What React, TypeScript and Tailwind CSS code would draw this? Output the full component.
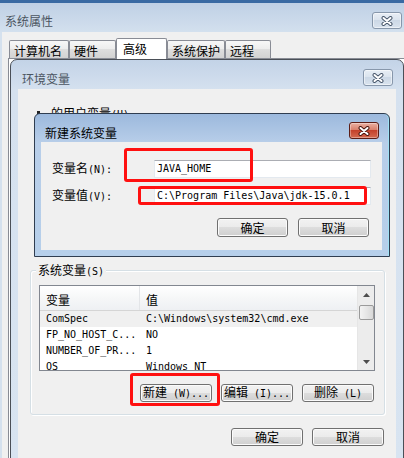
import type { ReactNode } from 'react'

const MONO = "font-['DejaVu_Sans_Mono','Noto_Sans_CJK_SC',monospace] text-[10px]"

const VARS: [string, string][] = [
  ['ComSpec', 'C:\\Windows\\system32\\cmd.exe'],
  ['FP_NO_HOST_C...', 'NO'],
  ['NUMBER_OF_PR...', '1'],
  ['OS', 'Windows_NT'],
]

function CloseX({ active = false }: { active?: boolean }) {
  return (
    <div
      className={
        active
          ? 'flex h-[17px] w-[30px] shrink-0 items-center justify-center rounded-[3px] border border-[#5c1d16] bg-[linear-gradient(#eab0a2,#d9806c_45%,#c4412b_50%,#d46a50)] shadow-[inset_0_0_0_1px_rgba(255,255,255,0.35)]'
          : 'flex h-[17px] w-[30px] shrink-0 items-center justify-center rounded-[3px] border border-[#8797ab] bg-[linear-gradient(#e8eef5,#dbe4ee_45%,#ccd8e6_50%,#d9e3ee)] shadow-[inset_0_0_0_1px_rgba(255,255,255,0.5)]'
      }
    >
      <svg width="14" height="10" viewBox="0 0 14 10">
        <path d="M3.5 2L10.5 8M10.5 2L3.5 8" stroke={active ? '#4a1710' : '#4a596d'} strokeWidth="4" strokeLinecap="round" fill="none" />
        <path d="M3.5 2L10.5 8M10.5 2L3.5 8" stroke="#fff" strokeWidth="2" strokeLinecap="round" fill="none" />
      </svg>
    </div>
  )
}

function Btn({ children, size }: { children: ReactNode; size: string }) {
  return (
    <div
      className={`flex items-center justify-center rounded-[3px] border border-[#707070] bg-[linear-gradient(#f2f2f2,#ebebeb_50%,#dddddd_50%,#cfcfcf)] shadow-[inset_0_0_0_1px_#fbfbfb] ${size}`}
    >
      {children}
    </div>
  )
}

function Mixed({ zh, en }: { zh: string; en: string }) {
  return (
    <span className="whitespace-pre">
      {zh}
      <span className={MONO}>{en}</span>
    </span>
  )
}

function Tab({ label, width, selected = false }: { label: string; width: string; selected?: boolean }) {
  if (selected) {
    return (
      <div className={`relative z-10 -mb-px h-[21px] shrink-0 rounded-t-[2px] border border-b-0 border-[#898c95] bg-white pl-[6px] pt-[3px] ${width}`}>
        {label}
      </div>
    )
  }
  return (
    <div className={`h-[18px] shrink-0 rounded-t-[2px] border border-b-0 border-[#898c95] bg-[linear-gradient(#f7f7f7,#ececec_50%,#dedede_50%,#d2d2d2)] pl-[4px] pt-[3px] ${width}`}>
      {label}
    </div>
  )
}

function Input({ value }: { value: string }) {
  return (
    <div className={`flex h-[18px] w-[217px] items-center border border-[#e3e9ef] border-t-[#abadb3] bg-white pl-[2px] text-black ${MONO}`}>
      {value}
    </div>
  )
}

function Arrow({ up }: { up?: boolean }) {
  return (
    <svg width="7" height="4" viewBox="0 0 7 4">
      <path d={up ? 'M0 4L3.5 0L7 4Z' : 'M0 0L7 0L3.5 4Z'} fill="#4d4d4d" />
    </svg>
  )
}

export default function App() {
  return (
    <div className="relative h-[458px] w-[404px] overflow-hidden bg-[#d5e1ee] font-['Noto_Sans_CJK_SC',sans-serif] text-[12px] leading-[14px] text-black">
      {/* 系统属性 window */}
      <div className="flex h-full flex-col border-t-[3px] border-[#3a6aa3]">
        <div className="flex h-[29px] shrink-0 items-start justify-between bg-[linear-gradient(#bfd0e5,#d3e0ee)] pl-[5px] pr-[2px]">
          <span className="mt-[11px] text-[#4b5561]">系统属性</span>
          <div className="mt-[9px]">
            <CloseX />
          </div>
        </div>
        <div className="ml-[2px] flex flex-1 flex-col bg-[#f0f0f0] pt-[6px]">
          <div className="flex h-[20px] items-end pl-[7px]">
            <Tab label="计算机名" width="w-[60px]" />
            <Tab label="硬件" width="w-[47px]" />
            <Tab label="高级" width="w-[51px]" selected />
            <Tab label="系统保护" width="w-[58px]" />
            <Tab label="远程" width="w-[46px]" />
          </div>
          <div className="ml-[6px] flex-1 border-l border-t border-[#898c95] bg-white" />
        </div>
      </div>

      {/* 环境变量 window */}
      <div className="absolute left-[10px] top-[59px] flex h-[410px] w-[394px] flex-col rounded-t-[7px] border border-[#4a4f57] bg-[linear-gradient(#c3d3e7,#d5e1ef_30px,#d8e4f1)] px-[7px]">
        <div className="flex h-[29px] shrink-0 items-start justify-between pl-[4px] pr-[3px]">
          <span className="mt-[12px] text-[#4b5561]">环境变量</span>
          <div className="mt-[9px]">
            <CloseX />
          </div>
        </div>
        <div className="flex flex-1 flex-col bg-[#f0f0f0]">
          {/* user variables, mostly hidden under the dialog */}
          <div className="h-[181px] shrink-0 pl-[19px] pt-[17px]">
            <span className="mr-[11px] inline-block h-[7px] w-[3px] bg-[#222]" />
            <Mixed zh="的用户变量" en="(U)" />
          </div>

          {/* system variables group */}
          <div className="ml-[12px] mr-[11px] flex flex-col rounded-[3px] border border-[#d5dfe5] pb-[12px] shadow-[inset_1px_1px_0_#fff,1px_1px_0_#fff]">
            <div className="-mt-[8px] ml-[5px] w-fit bg-[#f0f0f0] px-[2px]">
              <Mixed zh="系统变量" en="(S)" />
            </div>
            <div className="ml-[8px] mt-[6px] flex h-[86px] w-[336px] overflow-hidden border border-[#828790] bg-white">
              <div className="flex flex-1 flex-col">
                <div className="flex h-[25px] shrink-0 border-b border-[#d5d5d5] bg-[linear-gradient(#ffffff,#f6f7f8_50%,#eef0f3)]">
                  <div className="w-[100px] border-r border-[#e3e5e8] pl-[6px] pt-[7px]">变量</div>
                  <div className="pl-[6px] pt-[7px]">值</div>
                </div>
                {VARS.map(([name, value], i) => (
                  <div key={name} className={`flex h-[16px] shrink-0 items-center ${MONO} ${i === 0 ? 'bg-[#f0f0f0]' : ''}`}>
                    <div className="w-[100px] pl-[6px]">{name}</div>
                    <div className="pl-[6px]">{value}</div>
                  </div>
                ))}
              </div>
              <div className="flex w-[17px] shrink-0 flex-col items-center border-l border-[#e6e6e6] bg-[#ececec]">
                <div className="flex h-[17px] items-center justify-center">
                  <Arrow up />
                </div>
                <div className="mt-[2px] h-[15px] w-[15px] rounded-[2px] border border-[#9a9a9a] bg-[linear-gradient(90deg,#f3f3f3,#e6e6e6_50%,#d8d8d8)]" />
                <div className="flex-1" />
                <div className="flex h-[17px] items-center justify-center">
                  <Arrow />
                </div>
              </div>
            </div>
            <div className="mt-[13px] flex justify-end gap-[9px] pr-[10px]">
              <Btn size="h-[18px] w-[72px]">
                <Mixed zh="新建" en=" (W)..." />
              </Btn>
              <Btn size="h-[18px] w-[72px]">
                <Mixed zh="编辑" en=" (I)..." />
              </Btn>
              <Btn size="h-[18px] w-[72px]">
                <Mixed zh="删除" en=" (L)" />
              </Btn>
            </div>
          </div>

          <div className="mt-[13px] flex justify-end gap-[9px] pr-[12px]">
            <Btn size="h-[18px] w-[72px]">确定</Btn>
            <Btn size="h-[18px] w-[72px]">取消</Btn>
          </div>
        </div>
      </div>

      {/* 新建系统变量 dialog */}
      <div className="absolute left-[34px] top-[113px] flex h-[144px] w-[356px] flex-col rounded-t-[6px] border border-[#2f3d50] bg-[linear-gradient(#9cb9dd,#b8cee9_29px,#b6cfea)] pb-[6px] pl-[6px] pr-[7px] shadow-[inset_-1px_0_0_#9fe1f5]">
        <div className="flex h-[28px] shrink-0 items-start justify-between pl-[4px] pr-[3px]">
          <span className="mt-[12px]">新建系统变量</span>
          <div className="mt-[8px]">
            <CloseX active />
          </div>
        </div>
        <div className="flex flex-1 flex-col bg-[#f0f0f0] px-[11px] pt-[18px]">
          <div className="flex h-[18px] items-center">
            <span className="w-[102px]">
              <Mixed zh="变量名" en="(N):" />
            </span>
            <Input value="JAVA_HOME" />
          </div>
          <div className="mt-[9px] flex h-[18px] items-center">
            <span className="w-[102px]">
              <Mixed zh="变量值" en="(V):" />
            </span>
            <Input value="C:\Program Files\Java\jdk-15.0.1" />
          </div>
          <div className="mt-[13px] flex justify-end gap-[10px] pr-[2px]">
            <Btn size="h-[19px] w-[71px]">确定</Btn>
            <Btn size="h-[19px] w-[71px]">取消</Btn>
          </div>
        </div>
      </div>

      {/* red annotation boxes */}
      <div className="absolute left-[124px] top-[148px] h-[34px] w-[129px] rounded-[3px] border-[3px] border-[#ff1010]" />
      <div className="absolute left-[138px] top-[186px] h-[19px] w-[229px] rounded-[3px] border-[3px] border-[#ff1010]" />
      <div className="absolute left-[130px] top-[373px] h-[33px] w-[90px] rounded-[3px] border-[3px] border-[#ff1010]" />
    </div>
  )
}
